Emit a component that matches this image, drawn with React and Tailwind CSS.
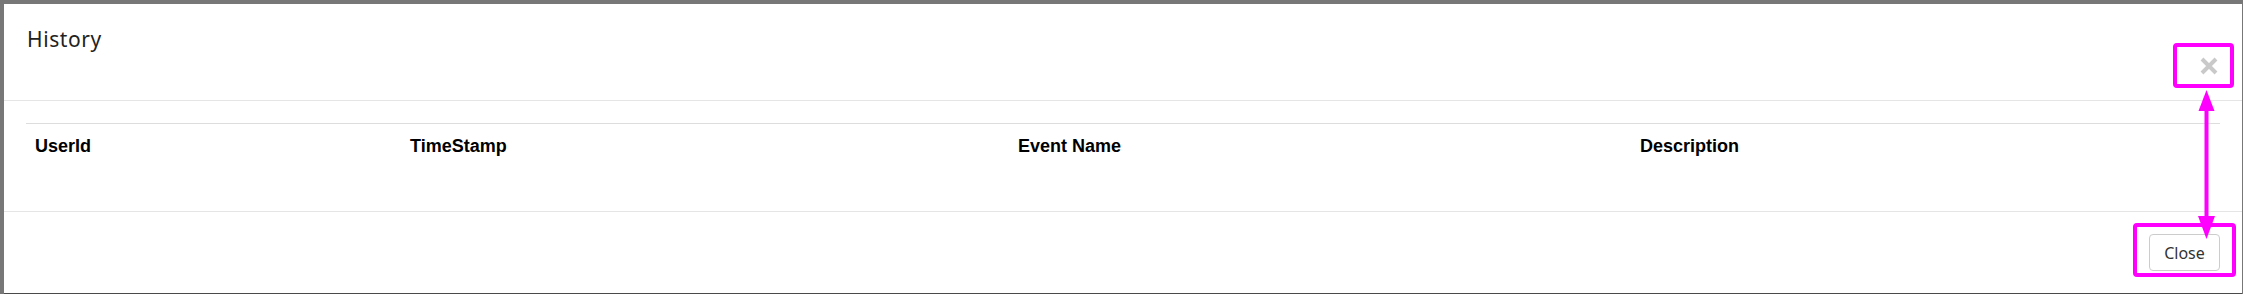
import React from 'react';

const columns = ['UserId', 'TimeStamp', 'Event Name', 'Description'];

const CloseIcon = () => (
  <svg width="20" height="18" viewBox="0 0 20 18" className="block">
    <path d="M3 2 L17 16 M17 2 L3 16" stroke="#c9c9c9" strokeWidth="4" />
  </svg>
);

// magenta callouts drawn on top of the dialog
const Annotations = () => (
  <>
    <div className="absolute left-[2173px] top-[43px] w-[61px] h-[45px] border-4 border-[#ff00ff] rounded-[4px]" />
    <div className="absolute left-[2133px] top-[223px] w-[103px] h-[54px] border-4 border-[#ff00ff] rounded-[4px]" />
    <svg className="absolute left-[2190px] top-[86px]" width="34" height="158" viewBox="0 0 34 158">
      <line x1="16.5" y1="20" x2="16.5" y2="136" stroke="#ff00ff" strokeWidth="4" />
      <polygon points="16.5,4 8.5,25 24.5,25" fill="#ff00ff" />
      <polygon points="16.5,153 8,130 25,130" fill="#ff00ff" />
    </svg>
  </>
);

export default function App() {
  return (
    <div className="relative w-[2243px] h-[294px] overflow-hidden bg-[#777777] pt-1 pl-1 pr-px">
      <div className="bg-white h-[290px] border-b border-[#4a4a4a] flex flex-col">
        {/* header */}
        <div className="h-[97px] border-b border-[#e5e5e5] pt-[21px] pl-[23px] pr-[23px]">
          <h4 className="font-['Noto_Sans',sans-serif] text-[21px] leading-[28px] tracking-[0.6px] text-[#222]">
            History
          </h4>
          <div className="flex justify-end mt-[4px]">
            <CloseIcon />
          </div>
        </div>

        {/* body */}
        <div className="h-[111px] border-b border-[#e5e5e5] pt-[22px] pl-[22px] pr-[22px]">
          <div className="grid grid-cols-[375px_608px_622px_589px] border-t border-[#dddddd]">
            {columns.map((c) => (
              <div
                key={c}
                className="pl-[9px] pt-[12px] pb-[12px] font-['Liberation_Sans',sans-serif] font-bold text-[18px] leading-[20px] text-black"
              >
                {c}
              </div>
            ))}
          </div>
        </div>

        {/* footer */}
        <div className="flex justify-end pt-[22px] pr-[22px]">
          <button
            type="button"
            className="w-[71px] h-[37px] border border-[#cccccc] rounded-[4px] bg-white font-['Noto_Sans',sans-serif] text-[16px] text-[#333]"
          >
            Close
          </button>
        </div>
      </div>
      <Annotations />
    </div>
  );
}
